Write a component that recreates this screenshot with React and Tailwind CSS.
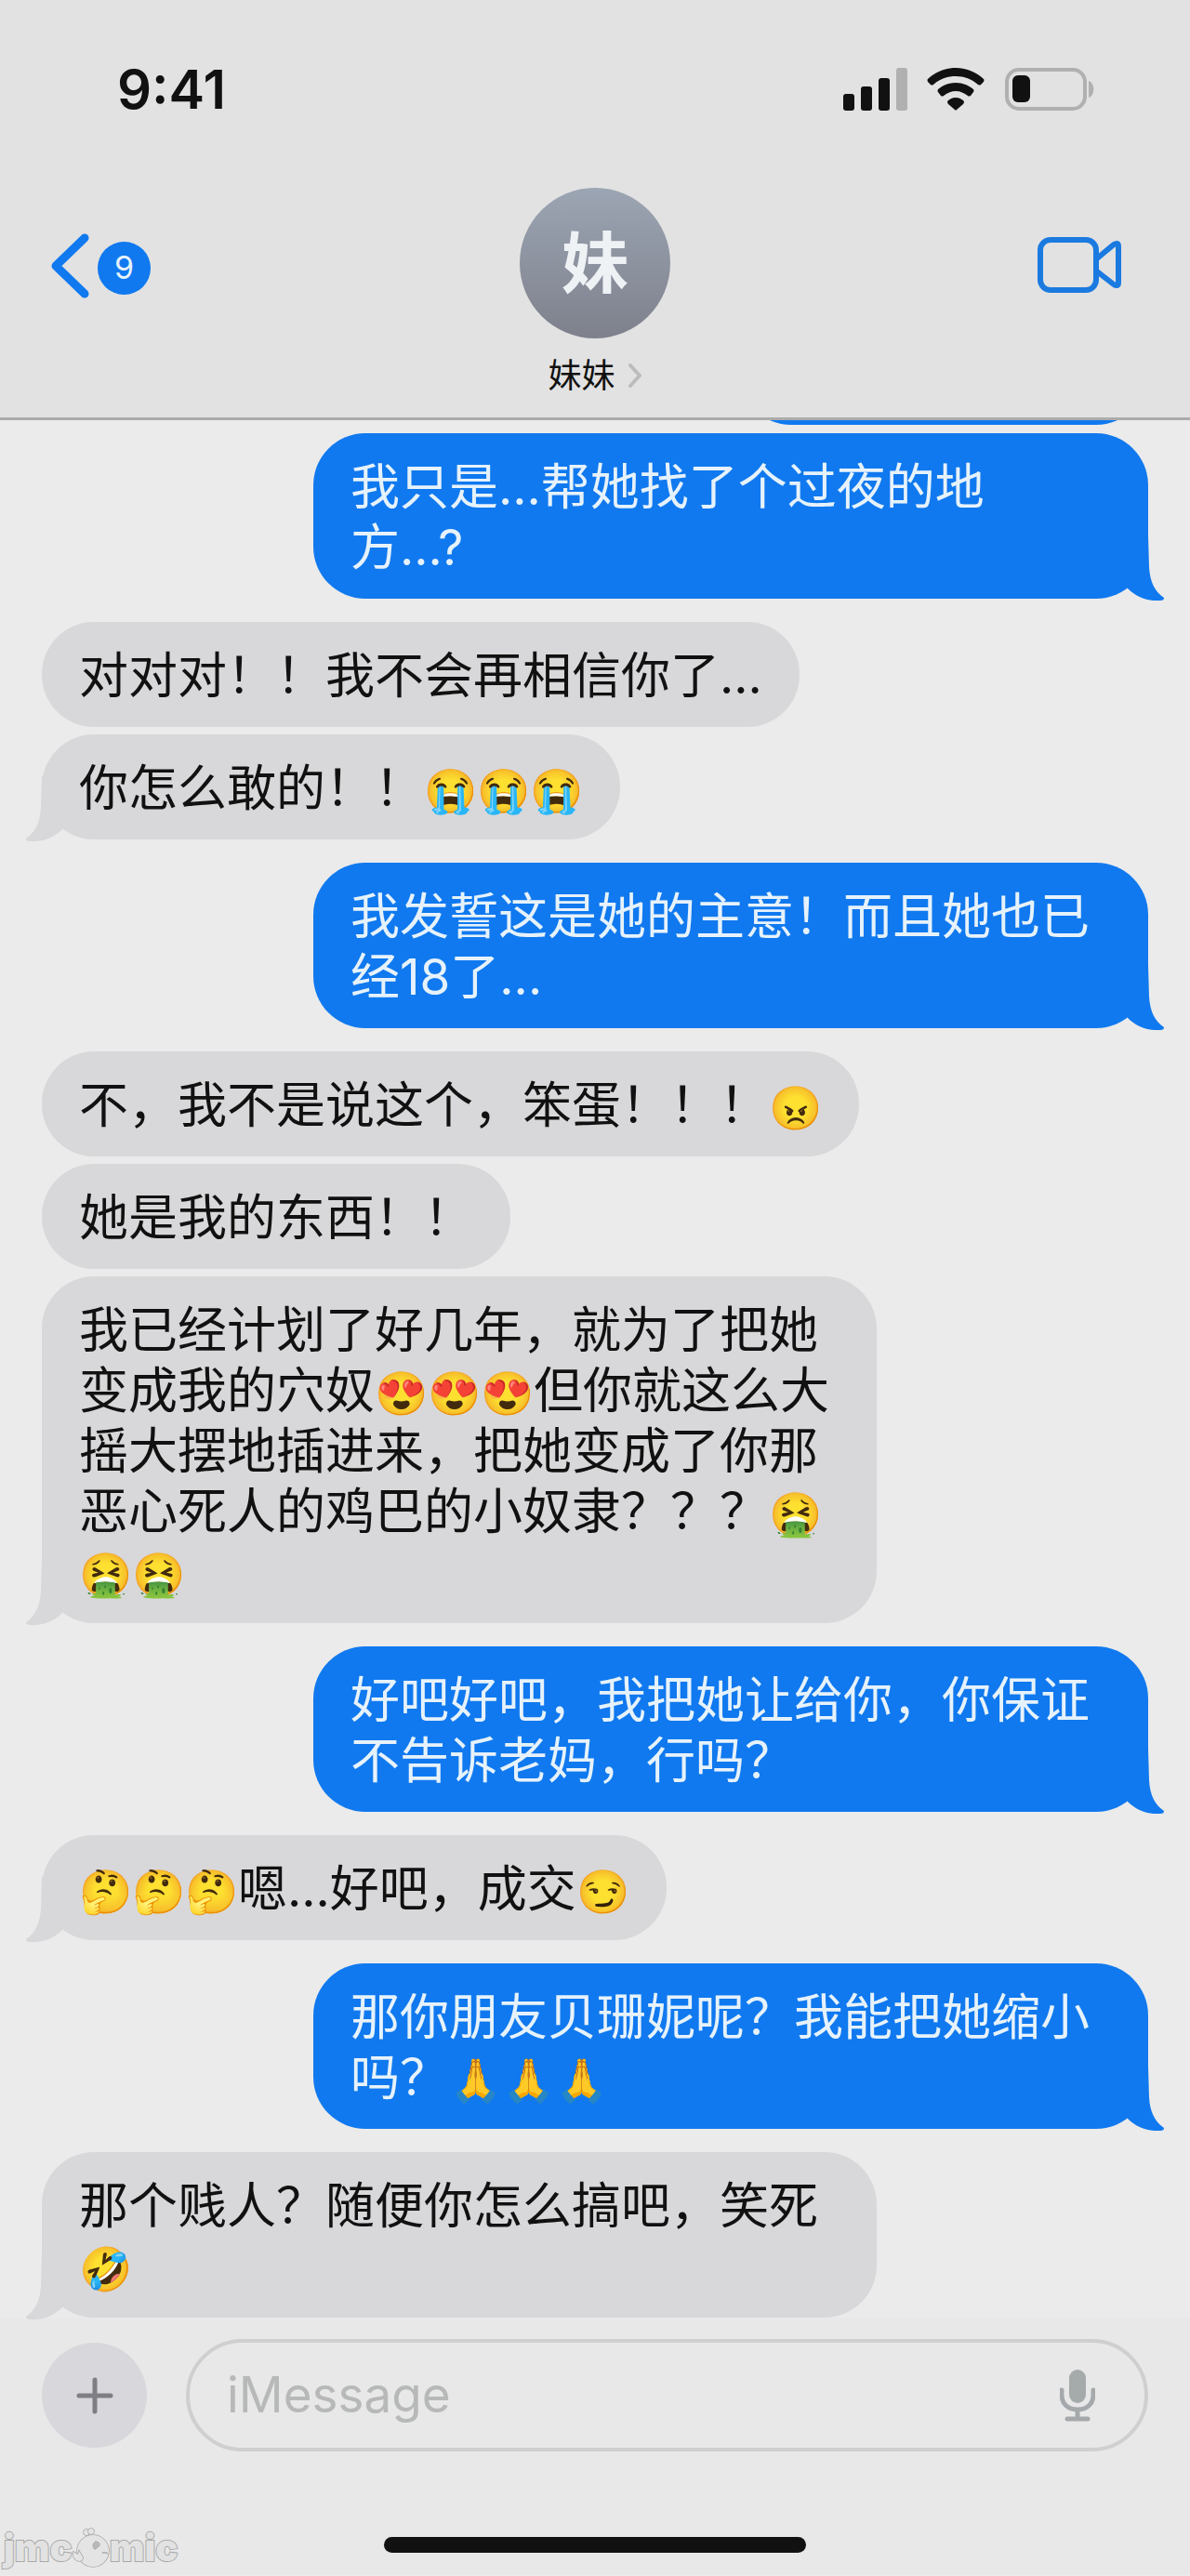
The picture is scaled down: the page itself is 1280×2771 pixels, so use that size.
import React from 'react';

const messages = [
  { from: 'me', tail: true, wide: true, lines: ['我只是...帮她找了个过夜的地', '方...?'] },
  { from: 'them', lines: ['对对对！！我不会再相信你了...'] },
  { from: 'them', tail: true, lines: ['你怎么敢的！！😭😭😭'] },
  { from: 'me', tail: true, wide: true, lines: ['我发誓这是她的主意！而且她也已', '经18了...'] },
  { from: 'them', lines: ['不，我不是说这个，笨蛋！！！😠'] },
  { from: 'them', lines: ['她是我的东西！！'] },
  {
    from: 'them',
    tail: true,
    wide: true,
    lines: [
      '我已经计划了好几年，就为了把她',
      '变成我的穴奴😍😍😍但你就这么大',
      '摇大摆地插进来，把她变成了你那',
      '恶心死人的鸡巴的小奴隶？？？🤮',
      '🤮🤮',
    ],
  },
  { from: 'me', tail: true, wide: true, lines: ['好吧好吧，我把她让给你，你保证', '不告诉老妈，行吗？'] },
  { from: 'them', tail: true, lines: ['🤔🤔🤔嗯...好吧，成交😏'] },
  { from: 'me', tail: true, wide: true, lines: ['那你朋友贝珊妮呢？我能把她缩小', '吗？🙏🙏🙏'] },
  { from: 'them', tail: true, wide: true, lines: ['那个贱人？随便你怎么搞吧，笑死', '🤣'] },
];

// Emoji are set a little smaller than the CJK glyphs so they keep the same rhythm
const Line = ({ text }) => (
  <p className="whitespace-nowrap">
    {text.split(/(\p{Extended_Pictographic}+)/u).filter(Boolean).map((part, i) =>
      /\p{Extended_Pictographic}/u.test(part) ? (
        <span key={i} className="text-[46px] leading-none">{part}</span>
      ) : (
        part
      )
    )}
  </p>
);

const Tail = ({ mine }) => (
  <svg
    viewBox="0 0 52 70"
    aria-hidden="true"
    className={
      mine
        ? 'absolute -right-[17px] -bottom-[2px] h-[70px] w-[52px] fill-[#1079ef]'
        : 'absolute -left-[17px] -bottom-[2px] h-[70px] w-[52px] -scale-x-100 fill-[#d8d8da]'
    }
  >
    <path d="M0 20 L35 0 L36 34 C37 50 42 60 52 67 C52 69 51 70 48 70 C34 71 22 66 13 57 Z" />
  </svg>
);

const Bubble = ({ message, spaced }) => {
  const mine = message.from === 'me';
  return (
    <li className={`flex ${mine ? 'justify-end' : 'justify-start'} ${spaced ? 'mt-[25px]' : 'mt-2'}`}>
      <div
        className={`relative rounded-[56px] px-10 pt-[26px] pb-[22px] ${message.wide ? 'w-[898px]' : ''} ${
          mine ? 'bg-[#1079ef] text-[#e6f2fb]' : 'bg-[#d8d8da] text-[#111111]'
        }`}
      >
        {message.lines.map((line, i) => (
          <Line key={i} text={line} />
        ))}
        {message.tail && <Tail mine={mine} />}
      </div>
    </li>
  );
};

const StatusBar = () => (
  <div className="flex items-center justify-between pt-[64px] pr-[101px] pl-[126px]">
    <span className="text-[58px] leading-[64px] font-semibold">9:41</span>
    <div className="flex items-center">
      <svg viewBox="0 0 70 46" className="h-[46px] w-[70px] fill-[#111111]" aria-label="signal">
        <rect x="0" y="28" width="12" height="18" rx="3" />
        <rect x="19" y="20" width="12" height="26" rx="3" />
        <rect x="38" y="11" width="12" height="35" rx="3" />
        <rect x="57" y="0" width="12" height="46" rx="3" fill="#b0b0b0" />
      </svg>
      <svg viewBox="0 0 62 46" className="ml-5 h-[46px] w-[62px] fill-[#111111]" aria-label="wifi">
        <path d="M31 0C43 0 54 5 61 12Q62 13 61 15L58 18Q57 19 55 18C48 12 40 9 31 9S14 12 7 18Q5 19 4 18L1 15Q0 13 1 12C8 5 19 0 31 0Z" />
        <path d="M31 16C39 16 45 19 50 23Q51 25 50 26L47 30Q45 31 44 30C40 27 36 25 31 25S22 27 18 30Q17 31 15 30L12 26Q11 25 12 23C17 19 23 16 31 16Z" />
        <path d="M31 32C35 32 38 34 40 36Q40 38 39 39L32 45Q31 46 30 45L23 39Q22 38 22 36C24 34 27 32 31 32Z" />
      </svg>
      <svg viewBox="0 0 98 46" className="ml-[22px] h-[46px] w-[98px] fill-[#111111]" aria-label="battery">
        <rect x="2" y="2" width="84" height="42" rx="13" fill="none" stroke="#b0b0b0" strokeWidth="4" />
        <path d="M90 14C97 16 97 30 90 32Z" fill="#b0b0b0" />
        <rect x="8" y="8" width="19" height="29" rx="6" />
      </svg>
    </div>
  </div>
);

const ChatHeader = () => (
  <div className="mt-[74px] grid grid-cols-3 items-start px-[55px] pb-[21px]">
    <button type="button" className="mt-[49px] flex items-center gap-2" aria-label="返回">
      <svg viewBox="0 0 42 70" className="h-[70px] w-[42px]">
        <path d="M36 5 L5 35 L36 65" fill="none" stroke="#1079ef" strokeWidth="9" strokeLinecap="round" strokeLinejoin="round" />
      </svg>
      <span className="mt-1 flex h-[57px] w-[57px] items-center justify-center rounded-full bg-[#1079ef] text-[34px] leading-none text-[#e6f2fb]">
        9
      </span>
    </button>
    <a href="#contact" className="flex flex-col items-center">
      <span className="flex h-[162px] w-[162px] items-center justify-center rounded-full bg-linear-to-b from-[#9ca5b3] to-[#7e818c] text-[72px] leading-none font-bold text-[#eff2f5]">
        妹
      </span>
      <span className="mt-4 flex items-center gap-[14px] text-[36px] leading-[48px]">
        妹妹
        <svg viewBox="0 0 15 26" className="h-[26px] w-[15px]">
          <path d="M2 2 L12 13 L2 24" fill="none" stroke="#bcbcbe" strokeWidth="4" strokeLinecap="round" strokeLinejoin="round" />
        </svg>
      </span>
    </a>
    <button type="button" className="mt-[52px] mr-[18px] justify-self-end" aria-label="视频通话">
      <svg viewBox="0 0 92 62" className="h-[62px] w-[92px] fill-none stroke-[#1b7ae0] stroke-6">
        <rect x="4" y="4" width="60" height="54" rx="11" />
        <path d="M65 24 L83 9 Q88 6 88 11 V50 Q88 55 83 52 L65 38" strokeLinejoin="round" />
      </svg>
    </button>
  </div>
);

const Composer = () => (
  <form className="flex items-center gap-[42px] px-[45px] pt-[23px]">
    <button type="button" className="flex h-[113px] w-[113px] shrink-0 items-center justify-center rounded-full bg-[#d8d8dc]" aria-label="添加">
      <svg viewBox="0 0 40 40" className="h-10 w-10 stroke-[#7e7e84] stroke-[5px]" strokeLinecap="round">
        <path d="M20 3 V37 M3 20 H37" />
      </svg>
    </button>
    <div className="flex h-[121px] min-w-0 flex-1 items-center rounded-full border-4 border-[#cfcfcf] pr-[53px] pl-10">
      <input
        type="text"
        aria-label="iMessage"
        placeholder="iMessage"
        className="min-w-0 flex-1 bg-transparent text-[53px] outline-none placeholder:text-[#b7b9b8]"
      />
      <svg viewBox="0 0 38 56" className="h-[56px] w-[38px]" aria-hidden="true">
        <rect x="10" y="0" width="18" height="36" rx="9" fill="#a5abaa" />
        <path d="M2 22 V27 C2 37 9 43 19 43 S36 37 36 27 V22 M19 43 V52 M8 53 H30" fill="none" stroke="#a5a9ac" strokeWidth="5" strokeLinecap="round" />
      </svg>
    </div>
  </form>
);

const Watermark = () => (
  <div className="flex h-[50px] items-center pl-1 text-[40px] leading-none font-black text-[#e2e2e2] [-webkit-text-stroke:2px_#a9a9a9] [paint-order:stroke_fill]">
    <span>jmc</span>
    <svg viewBox="0 0 40 44" className="h-[44px] w-[40px] shrink-0 fill-[#e4e4e4] stroke-[#a9a9a9] stroke-[1.5px]">
      <circle cx="15" cy="5" r="3" />
      <circle cx="20" cy="4" r="3" />
      <circle cx="22" cy="25" r="17" />
      <path d="M1 26 L6 29 L7 25 L10 30 Q13 34 8 36 Q3 36 1 31 Z" />
      <path d="M25 15 Q31 17 28 20 L24 23 Q20 19 25 15 Z" fill="#b9b9b9" />
      <path d="M32 27 Q36 26 38 28" fill="none" />
    </svg>
    <span>mic</span>
  </div>
);

export default function App() {
  return (
    <div className="min-h-screen overflow-hidden bg-[#ebebeb] font-['Inter','Noto_Sans_CJK_SC',sans-serif] text-[#111111]">
      <header className="border-b-3 border-[#ababab] bg-[#e2e2e2]">
        <StatusBar />
        <ChatHeader />
      </header>

      <main>
        {/* bottom edge of the message scrolled under the header */}
        <div className="flex h-[5px] items-end justify-end overflow-hidden pr-[45px]">
          <div className="h-[113px] w-[440px] shrink-0 rounded-[56px] bg-[#1079ef]" />
        </div>
        <ul className="-mt-4 px-[45px] text-[53px] leading-[65px]">
          {messages.map((message, i) => (
            <Bubble key={i} message={message} spaced={i === 0 || message.from !== messages[i - 1].from} />
          ))}
        </ul>
      </main>

      <footer className="bg-[#e8e8e8] pb-1">
        <Composer />
        <div className="mt-[79px] grid grid-cols-[1fr_454px_1fr] items-start">
          <Watermark />
          <div className="mt-[13px] h-[17px] rounded-full bg-[#111111]" />
        </div>
      </footer>
    </div>
  );
}
